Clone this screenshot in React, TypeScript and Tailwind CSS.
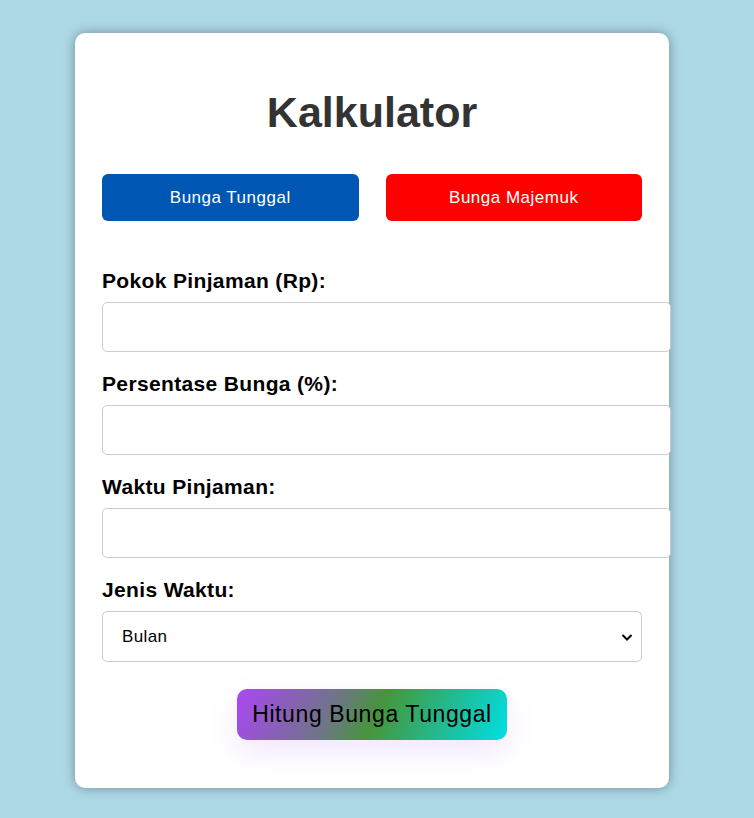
import { useState } from "react";

const font = { fontFamily: '"Liberation Sans", Arial, sans-serif' };

function Field({ label, value, onChange }: { label: string; value: string; onChange: (v: string) => void }) {
  return (
    <div className="mb-[20px]">
      <label className="block text-[21px] leading-[23px] tracking-[0.35px] font-bold text-black mb-[10px]">{label}</label>
      <input
        type="number"
        value={value}
        onChange={(e) => onChange(e.target.value)}
        className="block w-[569px] h-[50px] px-[12px] text-[16px] border border-[#ccc] rounded-[5px] bg-white outline-none"
      />
    </div>
  );
}

export default function App() {
  const [pokok, setPokok] = useState("");
  const [bunga, setBunga] = useState("");
  const [waktu, setWaktu] = useState("");
  const [jenis, setJenis] = useState("Bulan");

  return (
    <div className="min-h-screen bg-[#add8e6] pt-[33px] pb-[30px] pl-[75px]" style={font}>
      <div className="w-[594px] bg-white rounded-[10px] shadow-[0_0_12px_rgba(0,0,0,0.35)] px-[27px] pt-[55px] pb-[48px]">
        <h1 className="text-center text-[43px] leading-[49px] font-bold text-[#333]">Kalkulator</h1>

        <div className="flex gap-[27px] mt-[37px]">
          <button className="flex-1 h-[47px] rounded-[6px] bg-[#0056b3] text-white text-[17px] tracking-[0.5px]">Bunga Tunggal</button>
          <button className="flex-1 h-[47px] rounded-[6px] bg-[#ff0000] text-white text-[17px] tracking-[0.5px]">Bunga Majemuk</button>
        </div>

        <div className="mt-[48px]">
          <Field label="Pokok Pinjaman (Rp):" value={pokok} onChange={setPokok} />
          <Field label="Persentase Bunga (%):" value={bunga} onChange={setBunga} />
          <Field label="Waktu Pinjaman:" value={waktu} onChange={setWaktu} />

          <label className="block text-[21px] leading-[23px] tracking-[0.35px] font-bold text-black mb-[10px]">Jenis Waktu:</label>
          <div className="relative">
            <select
              value={jenis}
              onChange={(e) => setJenis(e.target.value)}
              className="block w-full h-[51px] pl-[19px] pr-[40px] text-[17px] tracking-[0.4px] text-black border border-[#ccc] rounded-[5px] bg-white appearance-none outline-none"
            >
              <option>Bulan</option>
              <option>Tahun</option>
            </select>
            <svg className="absolute right-[9px] top-[20px] pointer-events-none" width="12" height="12" viewBox="0 0 12 12" fill="none">
              <path d="M1.5 4l4.5 4.5L10.5 4" stroke="#000" strokeWidth="2" />
            </svg>
          </div>
        </div>

        <div className="flex justify-center mt-[27px]">
          <button className="w-[270px] h-[51px] rounded-[10px] text-[23px] tracking-[0.6px] text-black bg-[linear-gradient(115deg,#ab47f5_0%,#6f7488_35%,#46963a_52%,#27b585_72%,#00dfe4_100%)] shadow-[0_12px_30px_rgba(168,85,247,0.15)]">
            Hitung Bunga Tunggal
          </button>
        </div>
      </div>
    </div>
  );
}
